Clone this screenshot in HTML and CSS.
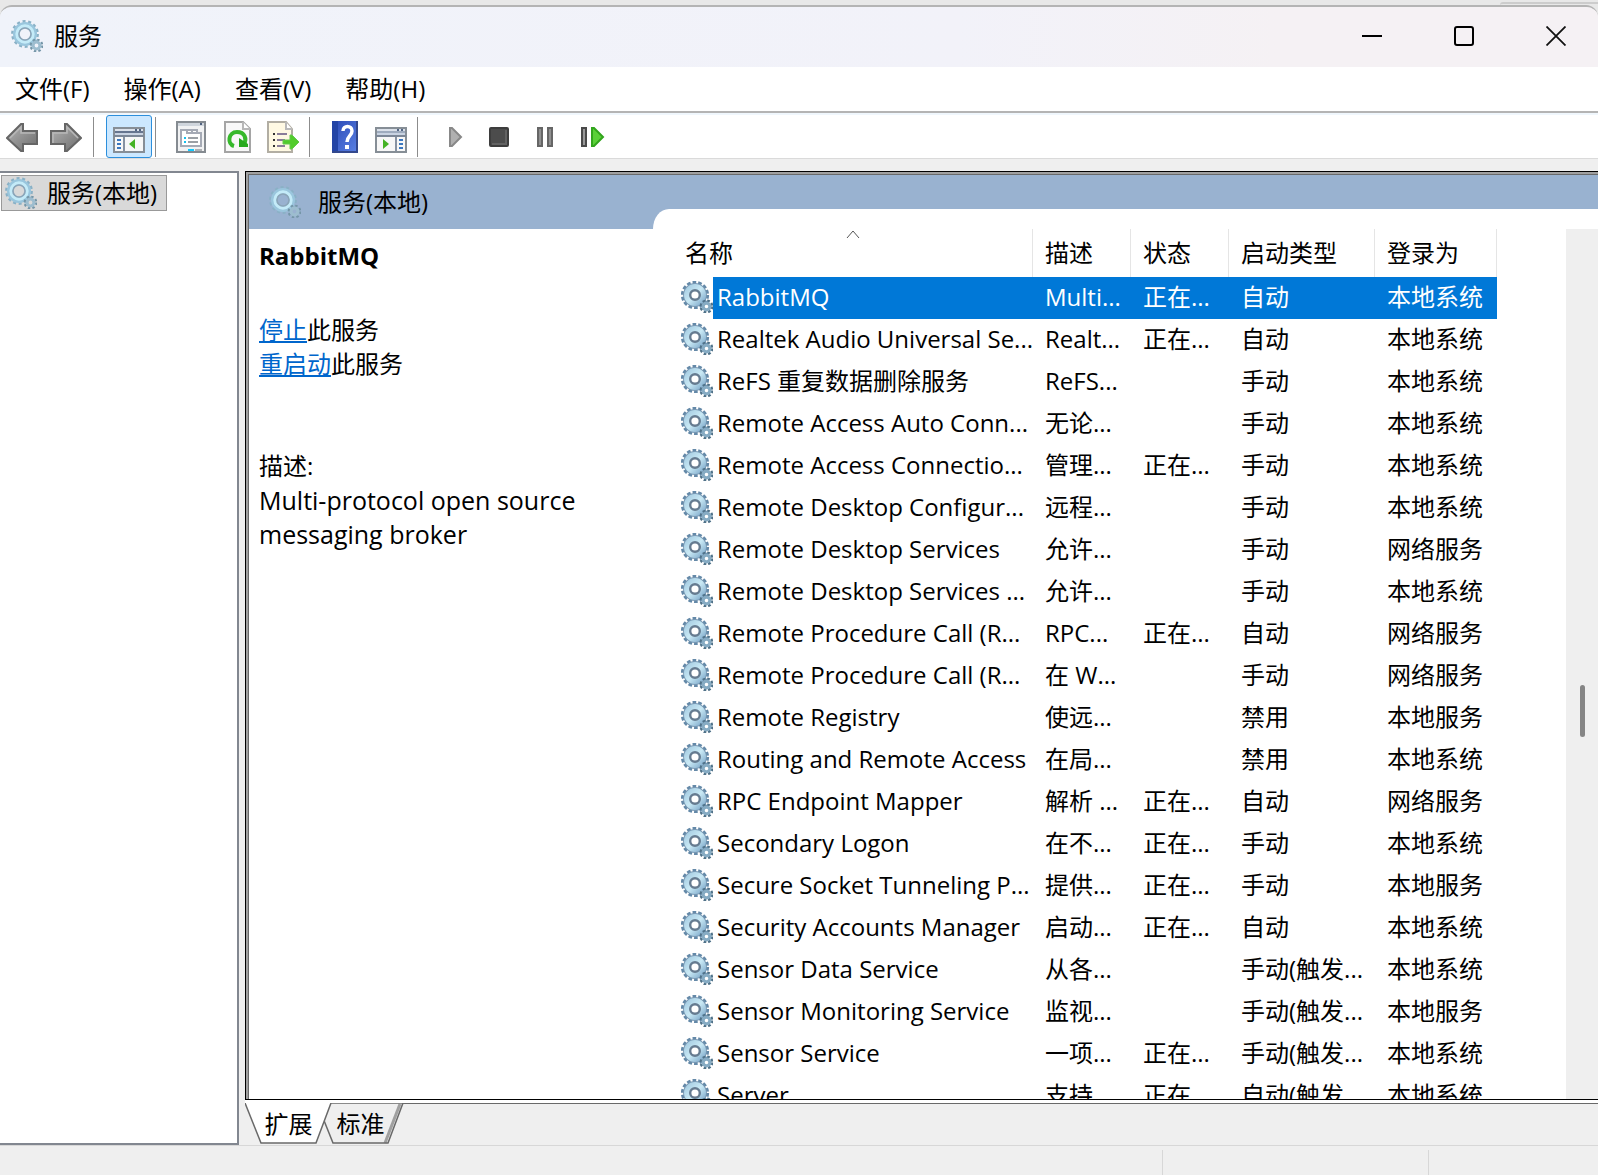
FILE: index.html
```
<!DOCTYPE html>
<html lang="zh-CN">
<head>
    <meta charset="UTF-8">
    <meta name="viewport" content="width=device-width, initial-scale=1.0">
    <title>服务</title>
    <link rel="stylesheet" href="styles.css">
</head>
<body>
<!-- Shared gear icons -->
<svg class="defs" width="0" height="0" aria-hidden="true">
    <defs>
        <linearGradient id="gear-fill" x1="0" y1="0" x2="1" y2="1">
            <stop offset="0" stop-color="#a9cfe4"/>
            <stop offset="0.5" stop-color="#c9e9f5"/>
            <stop offset="1" stop-color="#86b0cf"/>
        </linearGradient>
        <linearGradient id="steel" x1="0" y1="0" x2="1" y2="1">
            <stop offset="0" stop-color="#b5b5b5"/>
            <stop offset="1" stop-color="#6c6c6c"/>
        </linearGradient>
        <linearGradient id="blue" x1="0" y1="0" x2="1" y2="1">
            <stop offset="0" stop-color="#2a49b4"/>
            <stop offset="1" stop-color="#5b82e6"/>
        </linearGradient>
    </defs>
    <symbol id="gear" viewBox="0 0 32 32">
        <circle cx="14" cy="14" r="12.4" fill="none" stroke="#6489a8" stroke-width="3.4" stroke-dasharray="3.6 1.965"/>
        <circle cx="14" cy="14" r="8" fill="none" stroke="#7898b3" stroke-width="7.8"/>
        <circle cx="14" cy="14" r="8" fill="none" stroke="url(#gear-fill)" stroke-width="6"/>
        <circle cx="14" cy="14" r="4.8" fill="#fff" stroke="#667b90" stroke-width="2.4"/>
        <circle cx="25.500" cy="25.500" r="5.8" fill="none" stroke="#4f7188" stroke-width="2.4" stroke-dasharray="2.6 1.955"/>
        <circle cx="25.500" cy="25.500" r="3.4" fill="#fff" stroke="#86abc3" stroke-width="3.2"/>
    </symbol>
    <symbol id="gear-light" viewBox="0 0 32 32">
        <circle cx="14" cy="14" r="12.6" fill="none" stroke="#8ab1c6" stroke-width="2.6" stroke-dasharray="3 2.654"/>
        <circle cx="14" cy="14" r="9" fill="none" stroke="#9ac6dd" stroke-width="6"/>
        <circle cx="14" cy="14" r="8.2" fill="none" stroke="#c4ebf8" stroke-width="3"/>
        <circle cx="14" cy="14" r="6" fill="none" stroke="#8ba5b8" stroke-width="1.6"/>
        <circle cx="25.500" cy="25.500" r="5.8" fill="none" stroke="#7596a8" stroke-width="2.2" stroke-dasharray="2.4 2.155"/>
        <circle cx="25.500" cy="25.500" r="3.4" fill="none" stroke="#9dbdcf" stroke-width="3"/>
    </symbol>
</svg>

<div class="backdrop"><span class="backdrop-window"></span></div>
<div class="window">
    <!-- Title bar -->
    <header class="titlebar">
        <svg class="icon"><use href="#gear-light"/></svg>
        <h1 class="title">服务</h1>
        <div class="window-controls">
            <button class="control" aria-label="最小化"><svg width="20" height="20" viewBox="0 0 20 20"><path d="M0 10h20" stroke="#000" stroke-width="2"/></svg></button>
            <button class="control" aria-label="最大化"><svg width="20" height="20" viewBox="0 0 20 20"><rect x="1" y="1" width="18" height="18" rx="2" fill="none" stroke="#000" stroke-width="2"/></svg></button>
            <button class="control" aria-label="关闭"><svg width="20" height="20" viewBox="0 0 20 20"><path d="M0.500 0.500l19 19M19.500 0.500l-19 19" stroke="#111" stroke-width="1.800"/></svg></button>
        </div>
    </header>

    <nav class="menubar">
        <button class="menu">文件(F)</button>
        <button class="menu">操作(A)</button>
        <button class="menu">查看(V)</button>
        <button class="menu">帮助(H)</button>
    </nav>

    <!-- Toolbar -->
    <div class="toolbar">
        <button class="tool tool-nav" aria-label="后退"><svg class="icon" viewBox="0 0 32 32"><path d="M1 16L15 2h2v7h14v13H17v7h-2z" transform="translate(0 1)" fill="url(#steel)" stroke="#666" stroke-width="2"/><path d="M4 17L15 6v6h14" fill="none" stroke="#b8b8b8" stroke-width="1.500"/></svg></button>
        <button class="tool tool-nav" aria-label="前进"><svg class="icon" viewBox="0 0 32 32"><path d="M31 16L17 2h-2v7H1v13h14v7h2z" transform="translate(0 1)" fill="url(#steel)" stroke="#666" stroke-width="2"/><path d="M3 22V12h14V6l11 11" fill="none" stroke="#b8b8b8" stroke-width="1.500"/></svg></button>
        <span class="separator separator-nav"></span>
        <button class="tool tool-active" aria-label="显示/隐藏控制台树">
            <svg class="icon" viewBox="0 0 32 32">
                <path d="M1 7h30v24H1z" fill="#f7f7f7" stroke="#868e96" stroke-width="2"/>
                <path d="M2 8h28v2H2z" fill="#dbe1ea"/><path d="M2 10h28v2H2z" fill="#66758f"/><path d="M2 12h28v2H2z" fill="#c9d3e2"/>
                <path d="M22 8h2v2h-2zM26 8h2v2h-2z" fill="#526583"/>
                <path d="M1 15h30" stroke="#7c8797" stroke-width="2"/><path d="M11 16v14" stroke="#8792a2" stroke-width="2"/>
                <path d="M4 19h4M4 23h4M4 27h4" stroke="#3b78c0" stroke-width="2"/><path d="M22 18v10l-6-5z" fill="#44b224"/>
            </svg>
        </button>
        <span class="separator"></span>
        <button class="tool" aria-label="属性">
            <svg class="icon" viewBox="0 0 32 32">
                <path d="M2 1h28v30H2z" fill="#f1f2f3" stroke="#858b91" stroke-width="2"/>
                <path d="M3 2h26v3H3z" fill="#cfd5dc"/><path d="M25 2h2v2h-2z" fill="#50627f"/>
                <path d="M6 9h16v3h4v13H6z" fill="#fff" stroke="#a5aab5" stroke-width="2"/><path d="M12 8v4h14M17 8v4" fill="none" stroke="#a5aab5" stroke-width="2"/>
                <path d="M9 17h2M9 21h2" stroke="#13c0ef" stroke-width="2"/><path d="M13 17h10M13 21h10" stroke="#9ba0a5" stroke-width="2"/>
                <path d="M13 29h6" stroke="#11caff" stroke-width="2"/><path d="M20 29h7" stroke="#aeb1b4" stroke-width="2"/>
            </svg>
        </button>
        <button class="tool" aria-label="刷新">
            <svg class="icon" viewBox="0 0 32 32">
                <path d="M4 1h18l7 7v23H4z" fill="#f8f8f8" stroke="#a5a5a5" stroke-width="2"/><path d="M22 1v7h7" fill="#fff" stroke="#b7b7b7" stroke-width="2"/>
                <path d="M13 25C6 23 7 11 16 11c8 0 10 7 7 12" fill="none" stroke="#37b92b" stroke-width="4"/><path d="M18 17v9h9v-3z" fill="#28a91e"/>
            </svg>
        </button>
        <button class="tool" aria-label="导出列表">
            <svg class="icon" viewBox="0 0 32 32">
                <path d="M1 1h18l6 7v23H1z" fill="#fff9e3" stroke="#b2aea3" stroke-width="2"/><path d="M19 1v7h6" fill="#fff" stroke="#b9b9b9" stroke-width="2"/>
                <path d="M6 13h2M6 19h2M6 25h2" stroke="#333" stroke-width="2"/><path d="M10 13h10M10 19h8M10 25h8" stroke="#8a7d99" stroke-width="2"/>
                <path d="M16 19h7v-5h2l7 7-7 7h-2v-5h-7z" fill="#52cc2c" stroke="#64c94d"/>
            </svg>
        </button>
        <span class="separator"></span>
        <button class="tool" aria-label="帮助">
            <svg class="icon" viewBox="0 0 32 32">
                <path d="M3 0h26v32H3z" fill="url(#blue)"/><path d="M3 0h6v32H3z" fill="#2344a6"/><path d="M3 31h26M28 0v32" stroke="#33488d" stroke-width="2"/>
                <path d="M14 10c0-6 9-6 9 0 0 5-5 5-5 11" fill="none" stroke="#fff" stroke-width="3.500"/><path d="M16 24h4v4h-4z" fill="#fff"/>
            </svg>
        </button>
        <button class="tool" aria-label="显示/隐藏操作窗格">
            <svg class="icon" viewBox="0 0 32 32">
                <path d="M1 7h30v24H1z" fill="#f7f7f7" stroke="#868e96" stroke-width="2"/>
                <path d="M2 8h28v2H2z" fill="#dbe1ea"/><path d="M2 10h28v2H2z" fill="#9eabbe"/><path d="M2 12h28v2H2z" fill="#c9d3e2"/>
                <path d="M22 8h2v2h-2zM26 8h2v2h-2z" fill="#526583"/>
                <path d="M1 15h30" stroke="#7c8797" stroke-width="2"/><path d="M21 16v14" stroke="#8792a2" stroke-width="2"/>
                <path d="M24 19h4M24 23h4M24 27h4" stroke="#3b78c0" stroke-width="2"/><path d="M8 18v10l6-5z" fill="#44b224"/>
            </svg>
        </button>
        <span class="separator"></span>
        <button class="tool" aria-label="启动服务"><svg class="icon" viewBox="0 0 32 32"><path d="M13 7h2l9 9-9 9h-2z" fill="#b0b0b0" stroke="#888" stroke-width="2"/></svg></button>
        <button class="tool" aria-label="停止服务"><svg class="icon" viewBox="0 0 32 32"><rect x="7" y="7" width="18" height="18" rx="1" fill="#4c4c4c" stroke="#3d3d3d" stroke-width="2"/><path d="M9 23h14V9" fill="none" stroke="#626262" stroke-width="2"/></svg></button>
        <button class="tool" aria-label="暂停服务"><svg class="icon" viewBox="0 0 32 32"><path d="M9 7h4v18H9zM19 7h4v18h-4z" fill="#909090" stroke="#666" stroke-width="2"/></svg></button>
        <button class="tool" aria-label="重启动服务"><svg class="icon" viewBox="0 0 32 32"><path d="M7 7h4v18H7z" fill="#999" stroke="#4a4a4a" stroke-width="2"/><path d="M17 7h2l9 9-9 9h-2z" fill="#5bd038" stroke="#32a51d" stroke-width="2"/></svg></button>
    </div>

    <main class="workspace">
        <!-- Console tree -->
        <aside class="tree">
            <button class="tree-item"><svg class="icon"><use href="#gear-light"/></svg>服务(本地)</button>
        </aside>

        <section class="result">
            <div class="details">
                <div class="info">
                    <h2 class="info-header"><svg class="icon"><use href="#gear-light"/></svg>服务(本地)</h2>
                    <div class="info-body">
                        <h3 class="service-name">RabbitMQ</h3>
                        <p class="actions"><a href="#">停止</a>此服务<br><a href="#">重启动</a>此服务</p>
                        <p class="description-label">描述:</p>
                        <p class="description">Multi-protocol open source<br>messaging broker</p>
                    </div>
                </div>

                <div class="list">
                    <table class="services">
                        <colgroup>
                            <col class="col-icon"><col class="col-name"><col class="col-desc"><col class="col-status"><col class="col-startup"><col class="col-logon">
                        </colgroup>
                        <thead>
                            <tr>
                                <th colspan="2">名称<svg class="sort" width="14" height="9" viewBox="0 0 14 9"><path d="M1 8l6-7 6 7" fill="none" stroke="#555"/></svg></th>
                                <th>描述</th><th>状态</th><th>启动类型</th><th>登录为</th>
                            </tr>
                        </thead>
                        <tbody>
                            <tr class="selected"><td><svg class="icon"><use href="#gear"/></svg></td><td>RabbitMQ</td><td>Multi...</td><td>正在...</td><td>自动</td><td>本地系统</td></tr>
                            <tr><td><svg class="icon"><use href="#gear"/></svg></td><td>Realtek Audio Universal Se...</td><td>Realt...</td><td>正在...</td><td>自动</td><td>本地系统</td></tr>
                            <tr><td><svg class="icon"><use href="#gear"/></svg></td><td>ReFS 重复数据删除服务</td><td>ReFS...</td><td></td><td>手动</td><td>本地系统</td></tr>
                            <tr><td><svg class="icon"><use href="#gear"/></svg></td><td>Remote Access Auto Conn...</td><td>无论...</td><td></td><td>手动</td><td>本地系统</td></tr>
                            <tr><td><svg class="icon"><use href="#gear"/></svg></td><td>Remote Access Connectio...</td><td>管理...</td><td>正在...</td><td>手动</td><td>本地系统</td></tr>
                            <tr><td><svg class="icon"><use href="#gear"/></svg></td><td>Remote Desktop Configur...</td><td>远程...</td><td></td><td>手动</td><td>本地系统</td></tr>
                            <tr><td><svg class="icon"><use href="#gear"/></svg></td><td>Remote Desktop Services</td><td>允许...</td><td></td><td>手动</td><td>网络服务</td></tr>
                            <tr><td><svg class="icon"><use href="#gear"/></svg></td><td>Remote Desktop Services ...</td><td>允许...</td><td></td><td>手动</td><td>本地系统</td></tr>
                            <tr><td><svg class="icon"><use href="#gear"/></svg></td><td>Remote Procedure Call (R...</td><td>RPC...</td><td>正在...</td><td>自动</td><td>网络服务</td></tr>
                            <tr><td><svg class="icon"><use href="#gear"/></svg></td><td>Remote Procedure Call (R...</td><td>在 W...</td><td></td><td>手动</td><td>网络服务</td></tr>
                            <tr><td><svg class="icon"><use href="#gear"/></svg></td><td>Remote Registry</td><td>使远...</td><td></td><td>禁用</td><td>本地服务</td></tr>
                            <tr><td><svg class="icon"><use href="#gear"/></svg></td><td>Routing and Remote Access</td><td>在局...</td><td></td><td>禁用</td><td>本地系统</td></tr>
                            <tr><td><svg class="icon"><use href="#gear"/></svg></td><td>RPC Endpoint Mapper</td><td>解析 ...</td><td>正在...</td><td>自动</td><td>网络服务</td></tr>
                            <tr><td><svg class="icon"><use href="#gear"/></svg></td><td>Secondary Logon</td><td>在不...</td><td>正在...</td><td>手动</td><td>本地系统</td></tr>
                            <tr><td><svg class="icon"><use href="#gear"/></svg></td><td>Secure Socket Tunneling P...</td><td>提供...</td><td>正在...</td><td>手动</td><td>本地服务</td></tr>
                            <tr><td><svg class="icon"><use href="#gear"/></svg></td><td>Security Accounts Manager</td><td>启动...</td><td>正在...</td><td>自动</td><td>本地系统</td></tr>
                            <tr><td><svg class="icon"><use href="#gear"/></svg></td><td>Sensor Data Service</td><td>从各...</td><td></td><td>手动(触发...</td><td>本地系统</td></tr>
                            <tr><td><svg class="icon"><use href="#gear"/></svg></td><td>Sensor Monitoring Service</td><td>监视...</td><td></td><td>手动(触发...</td><td>本地服务</td></tr>
                            <tr><td><svg class="icon"><use href="#gear"/></svg></td><td>Sensor Service</td><td>一项...</td><td>正在...</td><td>手动(触发...</td><td>本地系统</td></tr>
                            <tr><td><svg class="icon"><use href="#gear"/></svg></td><td>Server</td><td>支持...</td><td>正在...</td><td>自动(触发...</td><td>本地系统</td></tr>
                        </tbody>
                    </table>
                    <div class="scrollbar"><span class="thumb"></span></div>
                </div>
            </div>

            <!-- View tabs -->
            <div class="tabs">
                <button class="tab tab-current">
                    <svg class="tab-shape" width="87" height="41" viewBox="0 0 87 41"><path d="M0 0L16 40H71L86 0z" fill="#fff"/><path d="M0 0L16 40H71L86 0" fill="none" stroke="#696969" stroke-width="1.500"/></svg>
                    <span>扩展</span>
                </button>
                <button class="tab">
                    <svg class="tab-shape" width="87" height="41" viewBox="0 0 87 41"><path d="M0 0L16 40H71L86 0z" fill="#efefef"/><path d="M83 1L68 40" stroke="#a0a0a0" stroke-width="3"/><path d="M0 0L16 40H71L86 0z" fill="none" stroke="#696969" stroke-width="1.500"/></svg>
                    <span>标准</span>
                </button>
            </div>
        </section>
    </main>

    <footer class="statusbar"><span class="status-main"></span><span class="status-progress"></span><span class="status-end"></span></footer>
</div>
</body>
</html>
```
FILE: styles.css
```
* {
    box-sizing: border-box;
}
body {
    margin: 0;
    height: 100vh;
    display: flex;
    flex-direction: column;
    overflow: hidden;
    background-color: #e8e8e8;
    color: #000;
    font-family: "Open Sans", "Noto Sans CJK SC", sans-serif;
    font-size: 24px;
    line-height: 34px;
}
h1, h2, h3, p {
    margin: 0;
    font-size: 24px;
    font-weight: normal;
}
button {
    padding: 0;
    border: none;
    background: none;
    color: inherit;
    font: inherit;
}
.defs {
    position: absolute;
}
.icon {
    display: block;
    flex: none;
    width: 32px;
    height: 32px;
}

/* Window frame */
.backdrop {
    display: flex;
    justify-content: flex-end;
    height: 5px;
    padding-top: 2px;
}
.backdrop-window {
    width: 98px;
    border-top: 2px solid #cccccc;
    border-top-left-radius: 12px;
}
.window {
    flex: 1;
    min-height: 0;
    display: flex;
    flex-direction: column;
    background-color: #efefef;
    border-top: 2px solid #b4b4b4;
    border-radius: 12px 12px 0 0;
    overflow: hidden;
}
.titlebar {
    display: flex;
    align-items: center;
    height: 60px;
    flex: none;
    padding: 0 0 3px 11px;
    gap: 11px;
    background: linear-gradient(to right, #f0f3fa, #f2f2f9 60%, #f5f1f4 80%);
}
.window-controls {
    display: flex;
    gap: 8px;
    margin-left: auto;
}
.control {
    display: flex;
    align-items: center;
    justify-content: center;
    width: 84px;
    height: 56px;
}

.menubar {
    display: flex;
    align-items: center;
    gap: 34px;
    flex: none;
    height: 46px;
    padding-left: 15px;
    background-color: #fff;
    border-bottom: 2px solid #b4b4b4;
}

/* Toolbar */
.toolbar {
    display: flex;
    align-items: center;
    flex: none;
    height: 46px;
    background-color: #fff;
    border-top: 2px solid #f0f7fd;
    border-bottom: 1px solid #dadada;
}
.tool {
    display: flex;
    align-items: center;
    justify-content: center;
    width: 46px;
    height: 43px;
}
.tool-nav {
    width: 44px;
}
.tool-active {
    background-color: #cce8ff;
    border: 1px solid #2c8fdc;
    border-radius: 3px;
}
.separator {
    width: 1px;
    height: 40px;
    margin: 0 12px 0 3px;
    background-color: #8c8c8c;
}
.separator-nav {
    margin-left: 5px;
}

/* Panes */
.workspace {
    flex: 1;
    min-height: 0;
    display: flex;
    gap: 6px;
    padding-top: 12px;
}
.tree {
    flex: none;
    width: 239px;
    padding: 2px 0 0 1px;
    background-color: #fff;
    border: 2px solid #828790;
    border-left: none;
}
.tree-item {
    display: flex;
    align-items: center;
    gap: 10px;
    height: 36px;
    padding: 0 9px 0 3px;
    background-color: #d9d9d9;
    border: 1px solid #999;
}
.result {
    flex: 1;
    min-width: 0;
    display: flex;
    flex-direction: column;
}
.details {
    flex: 1;
    min-height: 0;
    display: flex;
    padding: 4px 0 0 4px;
    background-color: #99b2d0;
    border-bottom: 1px solid #000;
    box-shadow: inset 1px 1px 0 #000, inset 3px 3px 0 #a0a0a0, inset 4px 4px 0 #696969;
}
.info {
    flex: none;
    width: 404px;
    display: flex;
    flex-direction: column;
}
.info-header {
    display: flex;
    align-items: center;
    gap: 17px;
    height: 54px;
    padding-left: 20px;
}
.info-body {
    flex: 1;
    padding: 10px;
    background-color: #fff;
}
.service-name {
    font-weight: bold;
}
.actions {
    margin-top: 40px;
}
.actions a {
    color: #0066cc;
}
.description-label {
    margin-top: 68px;
}
.description {
    font-size: 25px;
}

/* Services list */
.list {
    flex: 1;
    min-width: 0;
    display: flex;
    margin-top: 34px;
    padding: 20px 0 0 20px;
    background-color: #fff;
    border-top-left-radius: 16px 20px;
    overflow: hidden;
}
.services {
    flex: none;
    align-self: flex-start;
    width: 824px;
    table-layout: fixed;
    border-collapse: separate;
    border-spacing: 0;
    white-space: nowrap;
}
.col-icon {
    width: 40px;
}
.col-name {
    width: 320px;
}
.col-desc, .col-status {
    width: 98px;
}
.col-startup {
    width: 146px;
}
.col-logon {
    width: 122px;
}
.services th {
    position: relative;
    height: 48px;
    padding: 0 0 0 12px;
    border-right: 1px solid #e5e5e5;
    font-weight: normal;
    text-align: left;
}
.services td {
    height: 42px;
    padding: 0 0 2px 12px;
}
.services td:first-child {
    padding-left: 8px;
}
.services td:nth-child(2) {
    padding-left: 4px;
}
.selected td:not(:first-child) {
    background-color: #0078d7;
    color: #fff;
}
.sort {
    position: absolute;
    top: 1px;
    left: 50%;
    margin-left: -7px;
}
.scrollbar {
    position: relative;
    width: 32px;
    margin-left: auto;
    background-color: #efefef;
}
.thumb {
    position: absolute;
    top: 456px;
    left: 14px;
    width: 5px;
    height: 52px;
    border-radius: 3px;
    background-color: #858585;
}

/* Tabs */
.tabs {
    display: flex;
    flex: none;
    height: 45px;
    border-top: 3px solid #fff;
    box-shadow: inset 0 1px 0 #696969;
}
.tab {
    position: relative;
    width: 87px;
    height: 41px;
    margin-left: -15px;
}
.tab-current {
    z-index: 1;
    margin-left: 0;
}
.tab-shape {
    position: absolute;
    top: 0;
    left: 0;
}
.tab span {
    position: relative;
}

.statusbar {
    display: flex;
    flex: none;
    height: 30px;
    padding-top: 4px;
    border-top: 1px solid #d7d7d7;
}
.status-main {
    flex: 1;
}
.status-progress {
    width: 266px;
    border-left: 1px solid #d7d7d7;
}
.status-end {
    width: 170px;
    border-left: 1px solid #d7d7d7;
}
```
